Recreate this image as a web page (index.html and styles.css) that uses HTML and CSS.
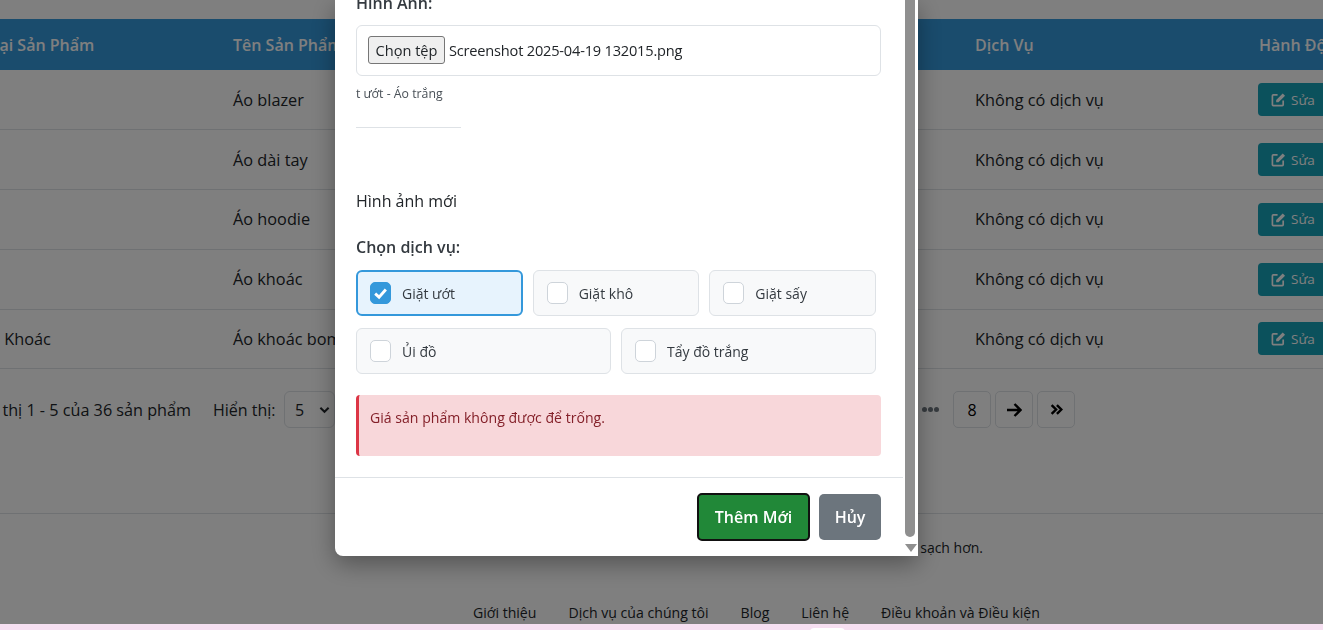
FILE: index.html
```html
<!DOCTYPE html>
<html lang="vi">
<head>
  <meta charset="UTF-8" />
  <meta name="viewport" content="width=device-width, initial-scale=1.0"/>
  <title>Quản lý sản phẩm</title>
  <link rel="stylesheet" href="styles.css">
</head>
<body>
  <div class="page">
    <table class="product-table">
      <colgroup>
        <col class="col-type"><col class="col-name"><col class="col-service"><col class="col-action">
      </colgroup>
      <thead>
        <tr><th>Loại Sản Phẩm</th><th>Tên Sản Phẩm</th><th>Dịch Vụ</th><th>Hành Động</th></tr>
      </thead>
      <tbody>
        <tr>
          <td></td><td>Áo blazer</td><td>Không có dịch vụ</td>
          <td><button class="btn-edit"><svg class="edit-icon" viewBox="0 0 16 16"><path d="M7 3H2.5a1 1 0 0 0-1 1v9.500a1 1 0 0 0 1 1H12a1 1 0 0 0 1-1V9" fill="none" stroke="currentColor" stroke-width="1.800"/><path d="M5.500 8.500 12.500 1.500l2.500 2.500-7 7H5.500z" fill="currentColor"/></svg>Sửa</button></td>
        </tr>
        <tr>
          <td></td><td>Áo dài tay</td><td>Không có dịch vụ</td>
          <td><button class="btn-edit"><svg class="edit-icon" viewBox="0 0 16 16"><path d="M7 3H2.5a1 1 0 0 0-1 1v9.500a1 1 0 0 0 1 1H12a1 1 0 0 0 1-1V9" fill="none" stroke="currentColor" stroke-width="1.800"/><path d="M5.500 8.500 12.500 1.500l2.500 2.500-7 7H5.500z" fill="currentColor"/></svg>Sửa</button></td>
        </tr>
        <tr>
          <td></td><td>Áo hoodie</td><td>Không có dịch vụ</td>
          <td><button class="btn-edit"><svg class="edit-icon" viewBox="0 0 16 16"><path d="M7 3H2.5a1 1 0 0 0-1 1v9.500a1 1 0 0 0 1 1H12a1 1 0 0 0 1-1V9" fill="none" stroke="currentColor" stroke-width="1.800"/><path d="M5.500 8.500 12.500 1.500l2.500 2.500-7 7H5.500z" fill="currentColor"/></svg>Sửa</button></td>
        </tr>
        <tr>
          <td></td><td>Áo khoác</td><td>Không có dịch vụ</td>
          <td><button class="btn-edit"><svg class="edit-icon" viewBox="0 0 16 16"><path d="M7 3H2.5a1 1 0 0 0-1 1v9.500a1 1 0 0 0 1 1H12a1 1 0 0 0 1-1V9" fill="none" stroke="currentColor" stroke-width="1.800"/><path d="M5.500 8.500 12.500 1.500l2.500 2.500-7 7H5.500z" fill="currentColor"/></svg>Sửa</button></td>
        </tr>
        <tr>
          <td>Áo Khoác</td><td>Áo khoác bomber</td><td>Không có dịch vụ</td>
          <td><button class="btn-edit"><svg class="edit-icon" viewBox="0 0 16 16"><path d="M7 3H2.5a1 1 0 0 0-1 1v9.500a1 1 0 0 0 1 1H12a1 1 0 0 0 1-1V9" fill="none" stroke="currentColor" stroke-width="1.800"/><path d="M5.500 8.500 12.500 1.500l2.500 2.500-7 7H5.500z" fill="currentColor"/></svg>Sửa</button></td>
        </tr>
      </tbody>
    </table>

    <div class="table-foot">
      <span class="count">Hiển thị 1 - 5 của 36 sản phẩm</span>
      <span class="per-page">Hiển thị:</span>
      <div class="per-select">5<svg class="caret" viewBox="0 0 12 8"><path d="M1.500 1.500 6 6l4.500-4.500" fill="none" stroke="currentColor" stroke-width="2.200"/></svg></div>
      <div class="pager">
        <svg class="dots" viewBox="0 0 17 5"><circle cx="2.500" cy="2.500" r="2.500"/><circle cx="8.500" cy="2.500" r="2.500"/><circle cx="14.500" cy="2.500" r="2.500"/></svg>
        <a class="page-box">8</a>
        <a class="page-box"><svg class="pager-icon" viewBox="0 0 16 16"><path d="M1 8h13M8.500 2l6 6-6 6" fill="none" stroke="currentColor" stroke-width="2.400"/></svg></a>
        <a class="page-box"><svg class="pager-icon small" viewBox="0 0 16 16"><path d="M2 2.500 7.500 8 2 13.500M8.500 2.500 14 8l-5.500 5.500" fill="none" stroke="currentColor" stroke-width="3"/></svg></a>
      </div>
    </div>

    <footer class="site-foot">
      <p class="slogan">Dịch vụ giặt ủi giúp quần áo của bạn sạch hơn.</p>
      <nav class="foot-links">
        <a>Giới thiệu</a><a>Dịch vụ của chúng tôi</a><a>Blog</a><a>Liên hệ</a><a>Điều khoản và Điều kiện</a>
      </nav>
    </footer>
  </div>

  <div class="backdrop"></div>
  <div class="bottom-strip"><span class="strip-tab"></span></div>

  <div class="modal">
    <div class="modal-main">
      <div class="modal-body">
        <label class="field-label first">Hình Ảnh:</label>
        <div class="file-box">
          <button class="file-btn">Chọn tệp</button>
          <span>Screenshot 2025-04-19 132015.png</span>
        </div>
        <div class="old-image"><span>Giặt ướt - Áo trắng</span></div>
        <p class="new-image">Hình ảnh mới</p>
        <label class="field-label">Chọn dịch vụ:</label>
        <div class="services">
          <div class="service third selected">
            <span class="check on"><svg viewBox="0 0 16 16"><path d="M3.500 8.500 6.800 11.500 12.500 5" fill="none" stroke="#fff" stroke-width="2.400"/></svg></span>Giặt ướt
          </div>
          <div class="service third"><span class="check"></span>Giặt khô</div>
          <div class="service third"><span class="check"></span>Giặt sấy</div>
          <div class="service half"><span class="check"></span>Ủi đồ</div>
          <div class="service half"><span class="check"></span>Tẩy đồ trắng</div>
        </div>
        <div class="alert">Giá sản phẩm không được để trống.</div>
      </div>
      <div class="modal-footer">
        <button class="btn btn-save">Thêm Mới</button>
        <button class="btn btn-cancel">Hủy</button>
      </div>
    </div>
    <div class="scrollbar">
      <div class="thumb"></div>
      <div class="arrow"></div>
    </div>
  </div>
</body>
</html>
```

FILE: styles.css
```css
* {
  box-sizing: border-box;
}
html, body {
  height: 100%;
}
body {
  margin: 0;
  overflow: hidden;
  background: #fff;
  color: #212529;
  font-family: "Open Sans", "Noto Sans", Arial, sans-serif;
  font-size: 16px;
}
.page {
  width: 1500px;
  margin-left: -31px;
  padding-top: 19px;
}
.product-table {
  table-layout: fixed;
  width: 1466px;
  border-collapse: collapse;
}
.col-type { width: 252px; }
.col-name { width: 742px; }
.col-service { width: 284px; }
.col-action { width: 188px; }
.product-table th {
  height: 51px;
  padding: 0 12px;
  background: #3498db;
  color: #fff;
  font-weight: 600;
  text-align: left;
  white-space: nowrap;
}
.product-table td {
  height: 59.75px;
  padding: 0 12px;
  border-bottom: 1px solid #dee2e6;
  font-size: 16.3px;
}
.product-table td:first-child {
  padding-left: 11px;
}
.btn-edit {
  display: flex;
  align-items: center;
  gap: 5px;
  width: 80px;
  height: 33px;
  margin-left: -1px;
  padding: 0 13px;
  border: 0;
  border-radius: 4px;
  background: #17a2b8;
  color: #fff;
  font: inherit;
  font-size: 13.5px;
}
.edit-icon {
  width: 15px;
  height: 15px;
  flex: none;
}
.table-foot {
  display: flex;
  align-items: center;
  height: 37px;
  margin-top: 22px;
}
.count {
  display: flex;
  justify-content: flex-end;
  width: 244px;
  padding-right: 22px;
  font-size: 16.2px;
  white-space: nowrap;
}
.per-page {
  width: 71px;
}
.per-select {
  display: flex;
  align-items: center;
  justify-content: space-between;
  width: 51px;
  height: 37px;
  padding: 0 4px 0 10px;
  border: 1px solid #dee2e6;
  border-radius: 6px;
}
.caret {
  width: 11px;
  height: 8px;
}
.pager {
  display: flex;
  align-items: center;
  gap: 4px;
  margin-left: 587px;
}
.dots {
  width: 17px;
  height: 5px;
  margin-right: 10px;
  fill: #6c757d;
}
.page-box {
  display: flex;
  align-items: center;
  justify-content: center;
  width: 38px;
  height: 37px;
  border: 1px solid #dee2e6;
  border-radius: 5px;
  color: #000;
}
.pager-icon {
  width: 16px;
  height: 16px;
}
.pager-icon.small {
  width: 13px;
  height: 13px;
}
.site-foot {
  margin-top: 85px;
  height: 110px;
  border-top: 1px solid #dee2e6;
}
.slogan {
  width: 1014px;
  height: 17px;
  margin: 24px 0 0;
  overflow: hidden;
  font-size: 14px;
  text-align: right;
  white-space: nowrap;
}
.foot-links {
  display: flex;
  gap: 32px;
  margin-top: 48px;
  padding-left: 504px;
  font-size: 14.1px;
}
.backdrop {
  position: fixed;
  inset: 0;
  background: rgba(0, 0, 0, 0.5);
}
.bottom-strip {
  position: fixed;
  left: 0;
  right: 0;
  bottom: 0;
  height: 6px;
  overflow: hidden;
  background: #f6dff1;
}
.strip-tab {
  display: block;
  width: 35px;
  height: 6px;
  margin: 4px 0 0 810px;
  background: #fff;
  border-radius: 4px 4px 0 0;
}
.modal {
  position: fixed;
  left: 335px;
  top: 0;
  display: flex;
  width: 583px;
  height: 556px;
  background: #fff;
  border-radius: 0 0 0 8px;
  box-shadow: 0 8px 24px rgba(0, 0, 0, 0.35);
}
.modal-main {
  display: flex;
  flex-direction: column;
  width: 570px;
}
.modal-body {
  flex: 1;
  overflow: hidden;
  padding: 0 22px 0 21px;
}
.field-label {
  display: block;
  font-weight: 600;
  color: #343a40;
}
.field-label.first {
  margin-top: -8px;
}
.file-box {
  display: flex;
  align-items: center;
  gap: 4px;
  width: 525px;
  height: 51px;
  margin-top: 11px;
  padding: 0 0 2px 11px;
  border: 1px solid #dee2e6;
  border-radius: 6px;
  font-size: 14.6px;
  letter-spacing: -0.2px;
}
.file-btn {
  width: 77px;
  height: 28px;
  padding: 0;
  border: 1px solid #767676;
  border-radius: 3px;
  background: #efefef;
  color: #212529;
  font: inherit;
}
.old-image {
  width: 105px;
  height: 43px;
  margin-top: 9px;
  overflow: hidden;
  border-bottom: 1px solid #dee2e6;
  color: #495057;
  font-size: 12.3px;
  white-space: nowrap;
}
.old-image span {
  display: block;
  margin-left: -19px;
}
.new-image {
  margin: 62px 0 0;
}
.new-image + .field-label {
  margin-top: 24px;
}
.services {
  display: grid;
  grid-template-columns: repeat(6, 1fr);
  gap: 12px 10px;
  width: 520px;
  margin-top: 12px;
}
.service {
  display: flex;
  align-items: center;
  gap: 11px;
  height: 46px;
  padding-left: 13px;
  border: 1px solid #dee2e6;
  border-radius: 6px;
  background: #f8f9fa;
  font-size: 14px;
  color: #343a40;
}
.third { grid-column: span 2; }
.half { grid-column: span 3; }
.service.selected {
  padding-left: 12px;
  border: 2px solid #3498db;
  background: #e7f3fd;
}
.check {
  display: block;
  width: 21px;
  height: 22px;
  border: 1px solid #ced4da;
  border-radius: 5px;
  background: #fff;
}
.check.on {
  border-color: #3498db;
  background: #3498db;
}
.check svg {
  display: block;
  width: 100%;
  height: 100%;
}
.alert {
  width: 525px;
  height: 61px;
  margin-top: 21px;
  padding: 13px 11px;
  border-left: 3px solid #dc3545;
  border-radius: 4px;
  background: #f8d7da;
  color: #842029;
  font-size: 14.1px;
}
.modal-footer {
  display: flex;
  justify-content: flex-end;
  align-items: center;
  gap: 9px;
  height: 79px;
  margin-right: 2px;
  padding-right: 22px;
  border-top: 1px solid #dee2e6;
}
.btn {
  height: 46px;
  border: 0;
  border-radius: 5px;
  color: #fff;
  font: inherit;
  font-weight: 600;
}
.btn-save {
  width: 113px;
  height: 48px;
  background: #218838;
  border: 2px solid #111;
}
.btn-cancel {
  width: 62px;
  background: #6c757d;
}
.scrollbar {
  width: 13px;
}
.thumb {
  width: 10px;
  height: 537px;
  border-radius: 0 0 5px 5px;
  background: #8f8f8f;
}
.arrow {
  width: 0;
  height: 0;
  margin-top: 7px;
  border-left: 6px solid transparent;
  border-right: 6px solid transparent;
  border-top: 8px solid #8f8f8f;
}
```
